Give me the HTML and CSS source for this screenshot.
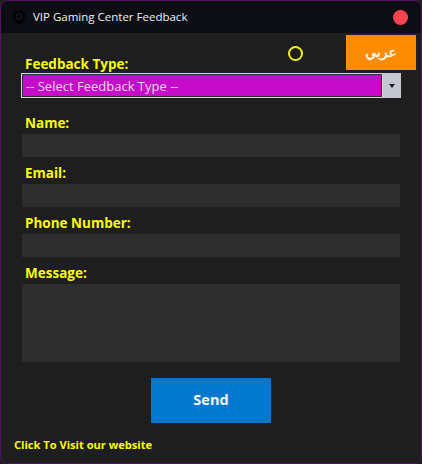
FILE: index.html
```html
<!DOCTYPE html>
<html lang="en">
<head>
<meta charset="utf-8">
<title>VIP Gaming Center Feedback</title>
<link rel="stylesheet" href="styles.css">
</head>
<body>
<div class="window">
  <header class="titlebar">
    <svg class="logo" viewBox="0 0 16 16" width="16" height="16">
      <path d="M8 1 L14 3 L14 8 C14 12 11 14.5 8 15.5 C5 14.5 2 12 2 8 L2 3 Z" fill="#000"/>
      <circle cx="8" cy="7.5" r="2.6" fill="none" stroke="#1c1c20" stroke-width="1.2"/>
    </svg>
    <span class="title">VIP Gaming Center Feedback</span>
    <span class="close"></span>
  </header>
  <main class="content">
    <div class="spinner"></div>
    <button class="lang" type="button" lang="ar" dir="rtl">عربي</button>
    <form class="form">
      <label class="label label-first">Feedback Type:</label>
      <div class="select">
        <div class="select-value">-- Select Feedback Type --</div>
        <div class="select-arrow"><span class="caret"></span></div>
      </div>
      <label class="label">Name:</label>
      <div class="field"></div>
      <label class="label">Email:</label>
      <div class="field"></div>
      <label class="label">Phone Number:</label>
      <div class="field"></div>
      <label class="label">Message:</label>
      <div class="field field-area"></div>
      <button class="send" type="button">Send</button>
    </form>
    <a class="link" href="#">Click To Visit our website</a>
  </main>
</div>
</body>
</html>
```
FILE: styles.css
```css
* { box-sizing: border-box; }
html, body { margin: 0; padding: 0; background: #1e1e1e; }
body { width: 422px; height: 464px; overflow: hidden; font-family: "Open Sans", "Noto Sans", sans-serif; }
.window {
  width: 422px; height: 464px;
  display: flex; flex-direction: column;
  background: #1e1e1e;
  border: 1px solid #561264;
  border-radius: 8px;
  overflow: hidden;
}
.titlebar {
  height: 32px; flex: none;
  display: flex; align-items: center;
  background: #0d0e13;
  padding: 0 13px 0 10px;
}
.logo { flex: none; opacity: .75; }
.title { margin-left: 6px; color: #f0f0f0; font-size: 11.5px; line-height: 16px; }
.close { margin-left: auto; width: 15px; height: 15px; border-radius: 50%; background: #ff4350; }
.content { position: relative; flex: 1; }
.spinner {
  position: absolute; left: 287px; top: 13px;
  width: 15px; height: 15px;
  border: 2.5px solid #f5f000; border-radius: 50%;
}
.lang {
  position: absolute; left: 345px; top: 2px;
  width: 70px; height: 35px;
  border: 0; padding: 0 0 2px;
  background: #ff8c00; color: #fff;
  font: 400 14px "Noto Sans", "DejaVu Sans", sans-serif;
  -webkit-text-stroke: 0.35px #fff;
}
.form { display: flex; flex-direction: column; padding: 21px 21px 0 21px; }
.label {
  color: #ffff00; font-size: 13.5px; font-weight: 700; line-height: 18px;
  height: 18px; margin: 7px 0 0 3px;
}
.label-first { margin-top: 0; padding-top: 1px; }
.select {
  display: flex; height: 25px; width: 380px; margin: 1px 0 9px -1px;
  background: #c3c7d2;
}
.select-value {
  flex: 1; margin: 0; padding: 3px 0 0 3px;
  border: 2px solid #2d2d33;
  outline: 1px solid #d8d8d8; outline-offset: -1px;
  background: #c60cc8; background-clip: padding-box;
  color: #f0d8f0; font-size: 13px; line-height: 17px;
}
.select-arrow { width: 18px; display: flex; align-items: center; justify-content: center; }
.caret { width: 0; height: 0; border: 3.5px solid transparent; border-top: 4px solid #1a1a20; border-bottom: 0; }
.field { height: 23px; width: 378px; background: #2d2d2d; margin-top: 2px; }
.field-area { height: 78px; }
.send {
  align-self: flex-start; margin: 16px 0 0 129px;
  width: 120px; height: 45px;
  border: 0; padding: 0 0 2px;
  background: #0078cf; color: #fff;
  font: 700 14.5px "Open Sans", "Noto Sans", sans-serif;
}
.link {
  position: absolute; left: 13px; top: 404px;
  color: #ffff00; font-size: 11.1px; font-weight: 700; line-height: 16px;
  text-decoration: none;
}
```
